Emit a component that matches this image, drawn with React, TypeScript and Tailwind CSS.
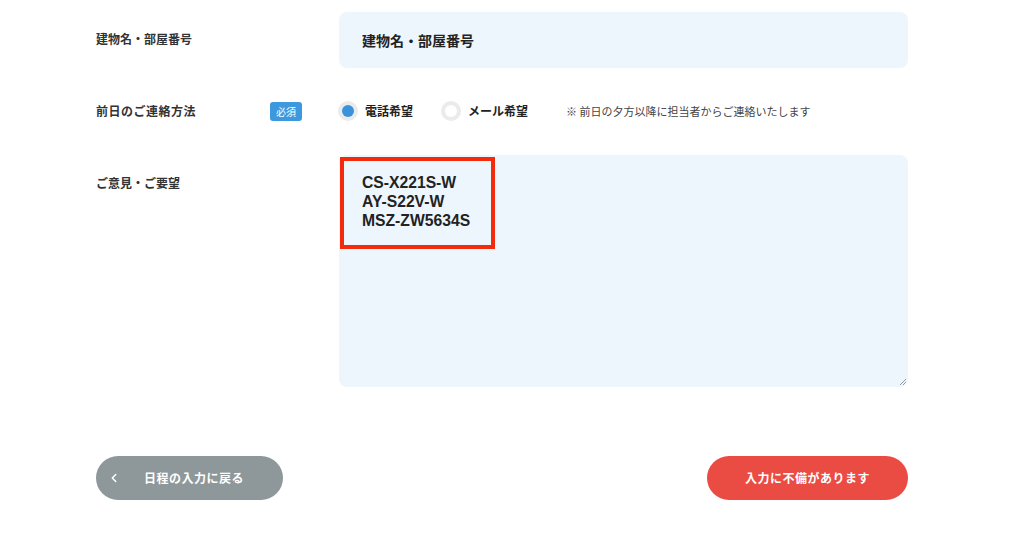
import { ChevronLeft } from 'lucide-react'

const jp = { fontFamily: '"Noto Sans CJK JP", "Noto Sans", sans-serif' }
const latin = { fontFamily: '"Liberation Sans", "Noto Sans CJK JP", sans-serif' }

function Radio({ label, checked }: { label: string; checked?: boolean }) {
  return (
    <label className="flex items-center gap-[7px]">
      <span className="w-[20px] h-[20px] rounded-full bg-[#ebebeb] flex items-center justify-center">
        <span className={`w-[12px] h-[12px] rounded-full ${checked ? 'bg-[#3a92da]' : 'bg-white'}`} />
      </span>
      <span className="text-[12px] font-bold text-[#222]">{label}</span>
    </label>
  )
}

export default function App() {
  return (
    <div className="w-[1024px] h-[535px] bg-white text-[#333]" style={jp}>
      <div className="ml-[96px] w-[812px] pt-[12px]">
        {/* 建物名 */}
        <div className="flex">
          <div className="w-[243px] pt-[18px] text-[12px] font-bold">建物名・部屋番号</div>
          <div className="flex-1 h-[56px] rounded-[8px] bg-[#eef6fd] flex items-center px-[23px] text-[14px] font-bold text-[#222]">
            建物名・部屋番号
          </div>
        </div>

        {/* 連絡方法 */}
        <div className="flex items-center mt-[33px] h-[20px]">
          <div className="w-[243px] flex items-center justify-between pr-[37px]">
            <span className="text-[12px] font-bold tracking-[0.5px]">前日のご連絡方法</span>
            <span className="bg-[#3d98de] text-white text-[10px] rounded-[3px] px-[6px] h-[19px] leading-[19px]">必須</span>
          </div>
          <div className="flex items-center -ml-[1px]">
            <Radio label="電話希望" checked />
            <div className="ml-[28px]">
              <Radio label="メール希望" />
            </div>
            <span className="ml-[38px] text-[11px] text-[#444]">※ 前日の夕方以降に担当者からご連絡いたします</span>
          </div>
        </div>

        {/* ご意見 */}
        <div className="flex mt-[34px]">
          <div className="w-[243px] pt-[19px] text-[12px] font-bold">ご意見・ご要望</div>
          <div className="relative flex-1 h-[232px] rounded-[8px] bg-[#eef6fd] px-[23px] pt-[18px]">
            <div className="text-[15.7px] font-bold leading-[19px] text-[#222]" style={latin}>
              <div>CS-X221S-W</div>
              <div>AY-S22V-W</div>
              <div>MSZ-ZW5634S</div>
            </div>
            <div className="absolute left-[1px] top-[2px] w-[155px] h-[92px] border-[4px] border-[#f42a0c]" />
            <svg className="absolute right-[1px] bottom-[1px]" width="8" height="8" viewBox="0 0 8 8">
              <path d="M7 1 L1 7 M7 4 L4 7" stroke="#999" strokeWidth="1" />
            </svg>
          </div>
        </div>

        {/* ボタン */}
        <div className="flex justify-between mt-[69px]">
          <button className="w-[187px] h-[44px] rounded-full bg-[#8e989a] text-white flex items-center pl-[11px] pr-[14px]">
            <ChevronLeft size={14} strokeWidth={2.5} />
            <span className="flex-1 text-center text-[12px] font-bold tracking-[0.5px] pr-[2px]">日程の入力に戻る</span>
          </button>
          <button className="w-[201px] h-[44px] rounded-full bg-[#ea4b42] text-white text-[12px] font-bold tracking-[0.5px]">
            入力に不備があります
          </button>
        </div>
      </div>
    </div>
  )
}
